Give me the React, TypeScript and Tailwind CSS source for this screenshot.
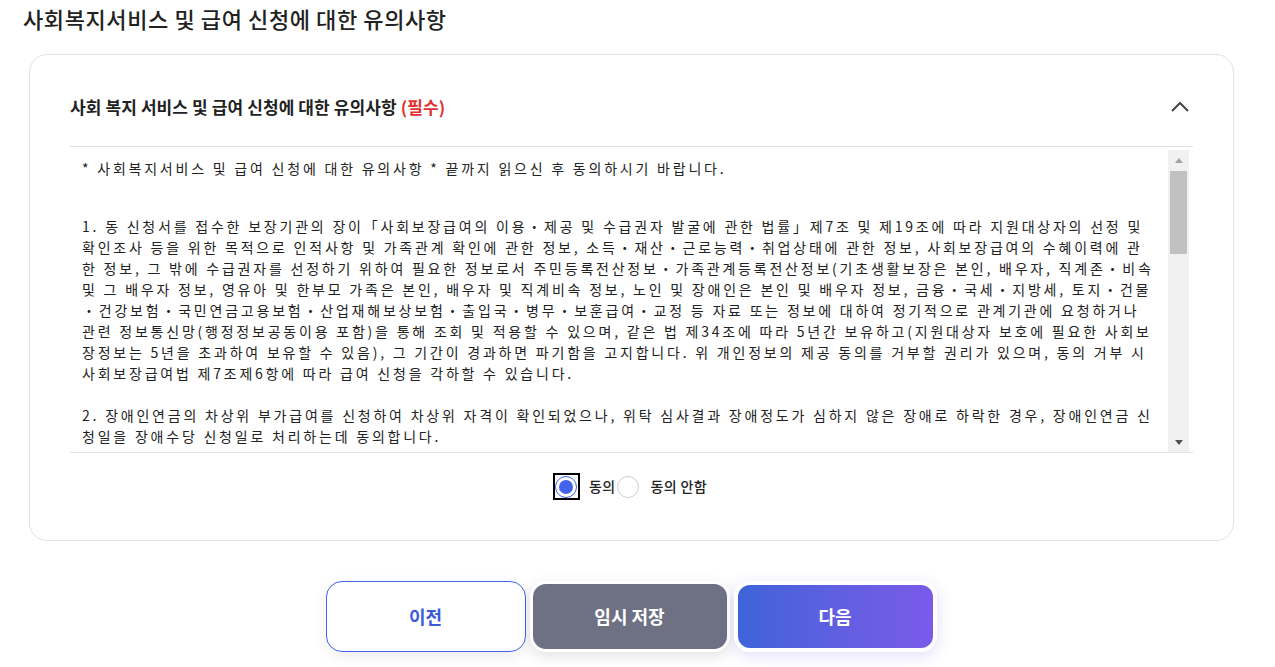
import { ReactNode } from 'react'

const lines1 = [
  '1. 동 신청서를 접수한 보장기관의 장이「사회보장급여의 이용・제공 및 수급권자 발굴에 관한 법률」제7조 및 제19조에 따라 지원대상자의 선정 및',
  '확인조사 등을 위한 목적으로 인적사항 및 가족관계 확인에 관한 정보, 소득・재산・근로능력・취업상태에 관한 정보, 사회보장급여의 수혜이력에 관',
  '한 정보, 그 밖에 수급권자를 선정하기 위하여 필요한 정보로서 주민등록전산정보・가족관계등록전산정보(기초생활보장은 본인, 배우자, 직계존・비속',
  '및 그 배우자 정보, 영유아 및 한부모 가족은 본인, 배우자 및 직계비속 정보, 노인 및 장애인은 본인 및 배우자 정보, 금융・국세・지방세, 토지・건물',
  '・건강보험・국민연금고용보험・산업재해보상보험・출입국・병무・보훈급여・교정 등 자료 또는 정보에 대하여 정기적으로 관계기관에 요청하거나',
  '관련 정보통신망(행정정보공동이용 포함)을 통해 조회 및 적용할 수 있으며, 같은 법 제34조에 따라 5년간 보유하고(지원대상자 보호에 필요한 사회보',
  '장정보는 5년을 초과하여 보유할 수 있음), 그 기간이 경과하면 파기함을 고지합니다. 위 개인정보의 제공 동의를 거부할 권리가 있으며, 동의 거부 시',
  '사회보장급여법 제7조제6항에 따라 급여 신청을 각하할 수 있습니다.',
]

const lines2 = [
  '2. 장애인연금의 차상위 부가급여를 신청하여 차상위 자격이 확인되었으나, 위탁 심사결과 장애정도가 심하지 않은 장애로 하락한 경우, 장애인연금 신',
  '청일을 장애수당 신청일로 처리하는데 동의합니다.',
]

function Para({ lines, className }: { lines: string[]; className?: string }) {
  return (
    <div className={className}>
      {lines.map((l, i) => (
        <div key={i} className="whitespace-nowrap">
          {l}
        </div>
      ))}
    </div>
  )
}

function Radio({ checked, focused, children }: { checked?: boolean; focused?: boolean; children: ReactNode }) {
  return (
    <label className="flex items-center">
      <span
        className={`flex h-[25px] w-[25px] items-center justify-center ${focused ? 'outline-2 outline-black -outline-offset-1' : ''}`}
      >
        <span
          className={`flex h-[22px] w-[22px] items-center justify-center rounded-full border ${
            checked ? 'border-[#4263eb]' : 'border-[#cfcfcf]'
          } bg-white`}
        >
          {checked && <span className="h-[14px] w-[14px] rounded-full bg-[#4263eb]" />}
        </span>
      </span>
      <span className="ml-[10px] text-[14px] font-medium tracking-[0.4px] text-[#222]">{children}</span>
    </label>
  )
}

export default function App() {
  return (
    <div className="min-h-screen w-full bg-white font-['Noto_Sans_CJK_KR','Noto_Sans',sans-serif] text-[#222]">
      <h1 className="pl-[23px] pt-[4px] text-[22px] font-medium leading-[28px] tracking-[0.6px] text-[#222]">
        사회복지서비스 및 급여 신청에 대한 유의사항
      </h1>

      {/* 유의사항 카드 */}
      <div className="ml-[29px] mt-[22px] w-[1205px] rounded-[18px] border border-[#e2e2e2] px-[40px]">
        <div className="flex items-center justify-between border-b border-[#e2e2e2] pb-[26px] pt-[39px]">
          <h2 className="text-[17px] font-bold leading-[26px] tracking-[0.1px] text-[#222]">
            사회 복지 서비스 및 급여 신청에 대한 유의사항 <span className="text-[#e03131]">(필수)</span>
          </h2>
          <svg width="20" height="12" viewBox="0 0 20 12" className="mr-[3px]">
            <path d="M2 10 L10 2 L18 10" fill="none" stroke="#444" strokeWidth="2" />
          </svg>
        </div>

        <div className="flex h-[306px] border-b border-[#e2e2e2]">
          <div className="flex-1 overflow-hidden pl-[12px] pt-[11px] text-[14px] leading-[21px] tracking-[2.78px] text-[#222]">
            <div className="mb-[37px] whitespace-nowrap">
              * 사회복지서비스 및 급여 신청에 대한 유의사항 * 끝까지 읽으신 후 동의하시기 바랍니다.
            </div>
            <Para lines={lines1} />
            <Para lines={lines2} className="mt-[21px]" />
          </div>

          {/* scrollbar */}
          <div className="mr-[4px] mt-[3px] flex w-[21px] flex-col items-center bg-[#f1f1f1] pb-[2px]">
            <div className="flex h-[21px] items-center justify-center">
              <svg width="8" height="5" viewBox="0 0 8 5">
                <path d="M0 5 L4 0 L8 5 Z" fill="#a3a3a3" />
              </svg>
            </div>
            <div className="h-[83px] w-[17px] bg-[#c1c1c1]" />
            <div className="flex-1" />
            <div className="flex h-[16px] items-center justify-center">
              <svg width="8" height="5" viewBox="0 0 8 5">
                <path d="M0 0 L8 0 L4 5 Z" fill="#505050" />
              </svg>
            </div>
          </div>
        </div>

        <div className="flex items-center justify-center pb-[41px] pt-[21px] pr-[2px]">
          <Radio checked focused>
            동의
          </Radio>
          <Radio>동의 안함</Radio>
        </div>
      </div>

      {/* 하단 버튼 */}
      <div className="ml-[29px] mt-[40px] flex w-[1205px] justify-center gap-[4px] pr-[1px]">
        <button className="h-[71px] w-[200px] rounded-[16px] border border-[#4263eb] bg-white text-[18px] font-bold text-[#3b5bdb] shadow-[0_4px_14px_rgba(0,0,0,0.08)]">
          이전
        </button>
        <button className="h-[71px] w-[200px] rounded-[16px] border-[3px] border-white bg-[#6e7083] text-[18px] font-bold text-white shadow-[0_4px_14px_rgba(0,0,0,0.12)]">
          임시 저장
        </button>
        <button className="h-[71px] w-[203px] rounded-[16px] border-[4px] border-white bg-gradient-to-r from-[#3d63d8] to-[#7a5ae9] text-[18px] font-bold text-white shadow-[0_4px_16px_rgba(90,80,220,0.18)]">
          다음
        </button>
      </div>
    </div>
  )
}
